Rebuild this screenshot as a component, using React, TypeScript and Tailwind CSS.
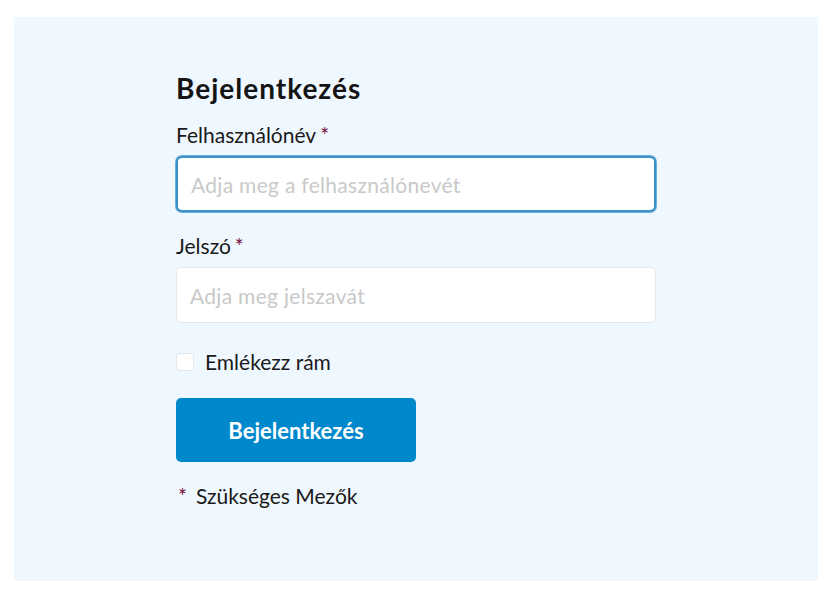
export default function App() {
  return (
    <div className="min-h-screen bg-white pt-[17px] pl-[14px] pr-[16px] pb-[18px]" style={{ fontFamily: "Lato, 'Noto Sans', sans-serif" }}>
      <div className="bg-[#f0f8ff] h-[564px] w-[804px] pt-[53px]">
        <form className="mx-auto w-[480px] text-[#1a1a1a]">
          <h1 className="text-[28px] font-bold leading-[36px] tracking-[1px] text-[#141414]">Bejelentkezés</h1>

          <label className="mt-[16px] block text-[21px] leading-[26px]">
            Felhasználónév<span className="ml-1 text-[#7a0f3c]">*</span>
          </label>
          <input
            type="text"
            placeholder="Adja meg a felhasználónevét"
            className="mt-[8px] block h-[56px] w-full rounded-[6px] border-2 border-[#3b8fcb] bg-white px-[13px] text-[21px] tracking-[0.3px] outline-none ring-1 ring-[#6aaede] placeholder:text-[#c9c9c9]"
          />

          <label className="mt-[21px] block text-[21px] leading-[26px]">
            Jelszó<span className="ml-1 text-[#7a0f3c]">*</span>
          </label>
          <input
            type="password"
            placeholder="Adja meg jelszavát"
            className="mt-[8px] block h-[56px] w-full rounded-[5px] border border-[#e4e8ec] bg-white px-[13px] text-[21px] tracking-[0.3px] outline-none placeholder:text-[#c9c9c9]"
          />

          <label className="mt-[26px] flex items-center gap-[11px] text-[21px] leading-[26px]">
            <span className="h-[18px] w-[18px] rounded-[3px] border border-[#e4e8ec] bg-white" />
            Emlékezz rám
          </label>

          <button
            type="button"
            className="mt-[23px] block h-[64px] w-[240px] rounded-[5px] bg-[#0088cc] text-[22px] font-bold text-white"
          >
            Bejelentkezés
          </button>

          <p className="mt-[21px] text-[21px] leading-[26px]">
            <span className="ml-[2px] mr-[9px] text-[#7a0f3c]">*</span>Szükséges Mezők
          </p>
        </form>
      </div>
    </div>
  );
}
